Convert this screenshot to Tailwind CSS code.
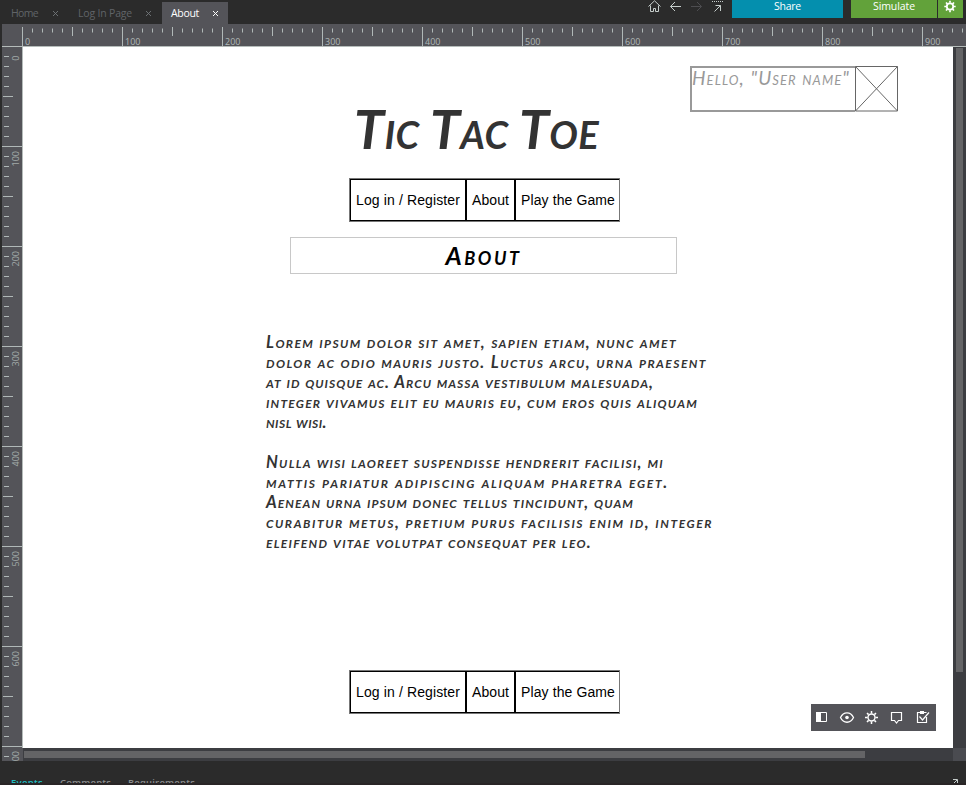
<!DOCTYPE html>
<html lang="en">
<head>
<meta charset="utf-8">
<title>Tic Tac Toe prototype</title>
<script src="https://cdn.jsdelivr.net/npm/@tailwindcss/browser@4"></script>
</head>
<body class="w-[966px] h-[785px] overflow-hidden bg-[#2b2b2b] font-['Open_Sans',sans-serif] flex flex-col">

<!-- Tabs and actions -->
<header class="h-6 shrink-0 flex justify-between text-[10.5px] leading-[22px]">
  <nav class="flex pt-[2px] text-[#606468] whitespace-nowrap">
    <div class="w-[67px] pl-[11px] pr-[9px] flex items-center justify-between"><span data-fit="27">Home</span><svg class="w-[5px] h-[5px]" viewBox="0 0 5 5" stroke="#73777a" stroke-width=".9"><path d="M0 0 5 5M5 0 0 5"/></svg></div>
    <div class="w-[95px] pl-[11px] pr-[11px] flex items-center justify-between"><span data-fit="54">Log In Page</span><svg class="w-[5px] h-[5px]" viewBox="0 0 5 5" stroke="#73777a" stroke-width=".9"><path d="M0 0 5 5M5 0 0 5"/></svg></div>
    <div class="w-[66px] pl-[9px] pr-[10px] flex items-center justify-between bg-[#545459] text-white font-medium"><span data-fit="28">About</span><svg class="w-[5px] h-[5px]" viewBox="0 0 5 5" stroke="#fff" stroke-width="1"><path d="M0 0 5 5M5 0 0 5"/></svg></div>
  </nav>
  <div class="flex h-[18px] pr-[3px]">
    <svg class="w-[88px] h-[18px]" viewBox="644 0 88 18" fill="none" stroke="#c6cecc" stroke-width="1">
      <path d="M648.5 6.5 654.5.8l6 5.7M650.5 5.500v6h3v-3h2v3h3v-6"/>
      <path d="M681 6.500H670.500M675 2l-4.500 4.500L675 11"/>
      <path stroke="#4d4d50" d="M691 6.500h10.500M697 2l4.500 4.500L697 11"/>
      <path stroke-dasharray="1 1" d="M712 1.500h11"/>
      <path d="M715.500 5.500h5v5.500M720.500 5.500 714.500 11.500"/>
    </svg>
    <div class="w-[111px] bg-[#048fae] text-white text-center leading-[13px] font-medium"><span data-fit="27">Share</span></div>
    <div class="w-[86px] ml-2 bg-[#62a23a] text-white text-center leading-[13px] font-medium"><span data-fit="42">Simulate</span></div>
    <div class="w-[25px] ml-[1px] bg-[#62a23a]">
      <svg class="w-[25px] h-[18px]" viewBox="0 0 25 18" fill="none" stroke="#fff"><circle cx="12" cy="6.500" r="3.200" stroke-width="1.800"/><path stroke-width="1.700" d="M12 .8v2M12 10.200v2M6.300 6.500h2M15.700 6.500h2M8 2.500l1.400 1.400M14.600 9.100l1.400 1.400M8 10.500l1.400-1.400M14.600 3.900 16 2.500"/></svg>
    </div>
  </div>
</header>

<svg id="hr" class="ml-[2px] w-[964px] h-[23px] shrink-0 bg-[#545459] text-[9px]" viewBox="2 24 964 23"></svg>

<main class="h-[714px] shrink-0 flex">
  <svg id="vr" class="ml-[2px] w-[21px] h-[714px] shrink-0 bg-[#545459] text-[9px]" viewBox="2 47 21 714"></svg>
  <div class="w-[930px] flex flex-col">
    <!-- Page canvas -->
    <section class="relative h-[701px] bg-white flex flex-col text-[#333]">
      <div class="h-[65px] flex justify-end pt-[19px] pr-[55px]">
        <div class="w-[165px] h-[46px] border-2 border-r-0 border-[#999] text-[#999] font-['Lato',sans-serif] italic [font-variant-caps:small-caps] text-[19px] leading-[20px] whitespace-nowrap"><span data-fit="158">Hello, "User name"</span></div>
        <svg class="w-[43px] h-[46px]" viewBox="0 0 43 46" fill="none" stroke="#666"><path d="M.5.5h42v44.500H.5zM.5.500l42 44.500M42.500.500.500 45"/></svg>
      </div>
      <h1 class="h-[66px] pl-[331px] leading-[34px] text-[54px] font-bold italic font-['Lato',sans-serif] [font-variant-caps:small-caps] whitespace-nowrap"><span data-fit="245">Tic Tac Toe</span></h1>
      <div class="ml-[326px] w-[271px] h-[44px] border border-[#777]">
        <div class="h-[42px] border-l border-y border-black flex text-black text-[14px] leading-[41px] font-['Liberation_Sans',sans-serif] whitespace-nowrap">
          <div class="w-[116px] border-r-2 border-black pl-[5px]"><span data-fit="104">Log in / Register</span></div>
          <div class="w-[49px] border-r-2 border-black pl-[5px]"><span data-fit="37">About</span></div>
          <div class="pl-[5px]"><span data-fit="94">Play the Game</span></div>
        </div>
      </div>
      <h2 class="ml-[267px] mt-[15px] w-[387px] h-[37px] border border-[#c8c8c8] text-black text-center text-[25px] leading-[34px] font-bold italic font-['Lato',sans-serif] [font-variant-caps:small-caps]"><span data-fit="76">About</span></h2>
      <div class="ml-[243px] mt-[58px] h-[220px] text-[16.500px] leading-5 font-bold italic font-['Lato',sans-serif] [font-variant-caps:small-caps] whitespace-nowrap">
        <p><span data-fit="411">Lorem ipsum dolor sit amet, sapien etiam, nunc amet</span><br><span data-fit="441">dolor ac odio mauris justo. Luctus arcu, urna praesent</span><br><span data-fit="388">at id quisque ac. Arcu massa vestibulum malesuada,</span><br><span data-fit="432">integer vivamus elit eu mauris eu, cum eros quis aliquam</span><br><span data-fit="61">nisl wisi.</span></p>
        <p class="mt-5"><span data-fit="398">Nulla wisi laoreet suspendisse hendrerit facilisi, mi</span><br><span data-fit="403">mattis pariatur adipiscing aliquam pharetra eget.</span><br><span data-fit="368">Aenean urna ipsum donec tellus tincidunt, quam</span><br><span data-fit="447">curabitur metus, pretium purus facilisis enim id, integer</span><br><span data-fit="326">eleifend vitae volutpat consequat per leo.</span></p>
      </div>
      <div class="ml-[326px] mt-[118px] w-[271px] h-[44px] shrink-0 border border-[#777]">
        <div class="h-[42px] border-l border-y border-black flex text-black text-[14px] leading-[41px] font-['Liberation_Sans',sans-serif] whitespace-nowrap">
          <div class="w-[116px] border-r-2 border-black pl-[5px]"><span data-fit="104">Log in / Register</span></div>
          <div class="w-[49px] border-r-2 border-black pl-[5px]"><span data-fit="37">About</span></div>
          <div class="pl-[5px]"><span data-fit="94">Play the Game</span></div>
        </div>
      </div>
      <!-- Floating view tools -->
      <svg class="absolute right-[17px] bottom-[17px] w-[125px] h-[27px] bg-[#545459]" viewBox="811 704 125 27" fill="none" stroke="#fff">
        <path d="M816.500 712.500h10v9h-10z"/><path fill="#fff" stroke="none" d="M816 712h5v10h-5z"/>
        <path stroke-width="1.300" d="M840.500 717.500c3-6.300 10-6.300 13 0-3 6.300-10 6.300-13 0z"/><circle cx="847" cy="717.500" r="1.800" fill="#fff" stroke="none"/>
        <circle cx="871.500" cy="717.500" r="3.500" stroke-width="1.400"/><path stroke-width="1.500" d="M871.500 711v2.500M871.500 721.500v2.500M865 717.500h2.500M875.500 717.500h2.500M867 713l1.600 1.600M874.400 720.400l1.600 1.600M867 722l1.600-1.600M874.400 714.600l1.600-1.600"/>
        <path stroke-width="1.200" d="M891.500 712.500h10v8h-3l-2 2.500-2-2.500h-3z"/>
        <path stroke-width="1.200" d="M926.500 717v5.500h-9v-10h9M919.500 716.500l3 3.500 6.500-7.500"/><path fill="#fff" stroke="none" d="M920 711h4v3h-4z"/>
      </svg>
    </section>
    <div class="h-[13px] bg-[#3c3d41] pt-[3px] pl-[1px]"><div class="w-[841px] h-[7px] bg-[#646466]"></div></div>
  </div>
  <aside class="w-[13px] flex flex-col bg-[#3c3d41]">
    <div class="h-[701px] pt-[1px] pl-[3px]"><div class="w-[7px] h-[624px] bg-[#646466]"></div></div>
    <div class="h-[13px] bg-[#4a4b50]"></div>
  </aside>
</main>

<footer class="h-[22px] overflow-hidden flex pt-[15px] pl-[11px] text-[9.5px] leading-[14px] font-semibold text-[#8b8d8f]">
  <div class="w-[49px] text-[#20bcc0]"><span data-fit="32">Events</span></div>
  <div class="w-[68px]"><span data-fit="51">Comments</span></div>
  <div class="grow"><span data-fit="67">Requirements</span></div>
  <svg class="w-[13px] h-[7px] mt-px" viewBox="953 777 13 7" fill="none" stroke="#c6cecc"><path d="M953 779.500h4.500v4.500M957 780l-4 4"/></svg>
</footer>
<div class="h-[2px] shrink-0 bg-[#292526]"></div>

<script>
// Ruler ticks: one every 10 units, longer at 50, full length with a label at 100
let h = '<path d="M2 46.5H966" stroke="#b5bcba"/>', v = '<path d="M22.5 47V748" stroke="#b5bcba"/>';
for (let i = 0; i <= 94; i++) {
  const x = 22.5 + i * 10, y = 46.5 + i * 10;
  const a = i % 10 === 0 ? [27, 46] : i % 5 === 0 ? [27, 36] : [28.5, 32.5];
  const b = i % 10 === 0 ? [2, 22] : i % 5 === 0 ? [3, 13] : [4, 9];
  h += `<path d="M${x} ${a[0]}V${a[1]}" stroke="#b0b8b7"/>`;
  if (i && y < 761) v += `<path d="M${b[0]} ${y}H${b[1]}" stroke="#b0b8b7"/>`;
  if (i % 10 === 0) {
    h += `<text x="${x + 2.5}" y="45" fill="#b0b8b7">${i * 10}</text>`;
    if (i <= 70) v += `<text text-anchor="end" transform="translate(19 ${i ? y + 4.5 : 55.5}) rotate(-90)" fill="#a2aaa9">${i * 10}</text>`;
  }
}
document.getElementById('hr').innerHTML = h;
document.getElementById('vr').innerHTML = v;
// Track each label out to its set width
function fit() {
  document.querySelectorAll('[data-fit]').forEach(e => {
    e.style.letterSpacing = '0px';
    const w = e.getBoundingClientRect().width;
    e.style.letterSpacing = (e.dataset.fit - w) / e.textContent.length + 'px';
  });
}
fit();
addEventListener('load', fit);
document.fonts.ready.then(fit);
new ResizeObserver(fit).observe(document.body);
setTimeout(fit, 50);
</script>
</body>
</html>
